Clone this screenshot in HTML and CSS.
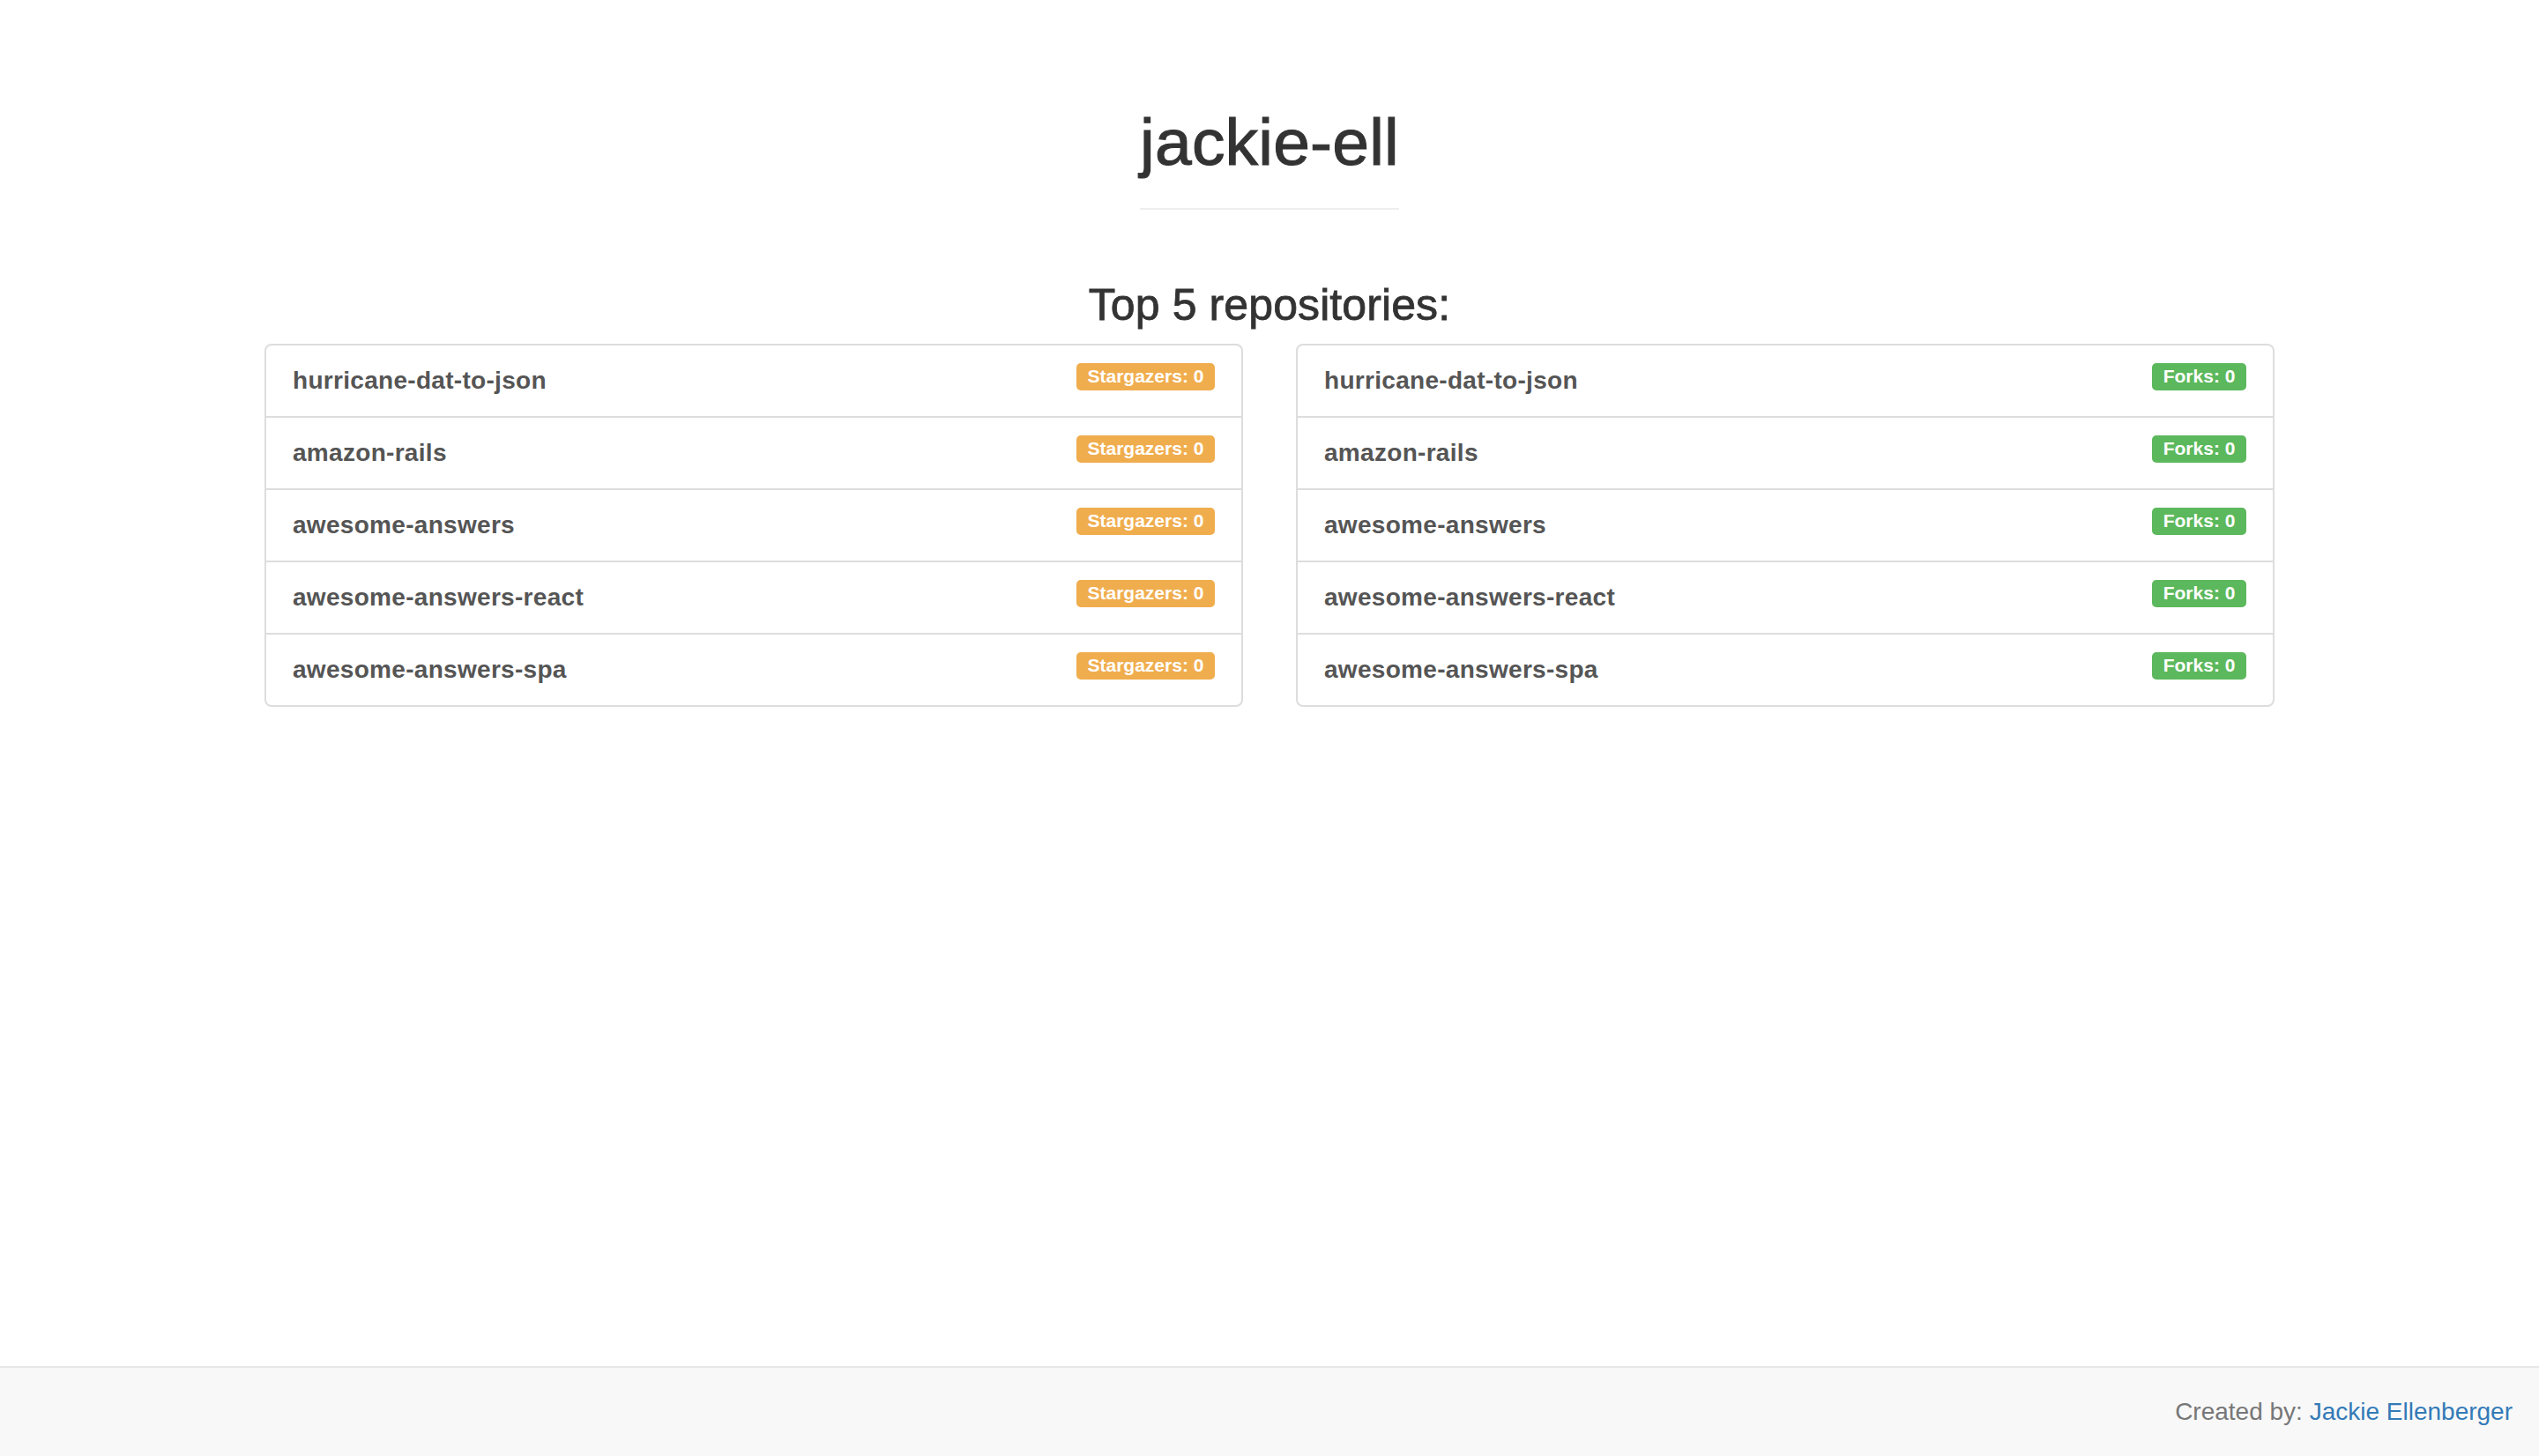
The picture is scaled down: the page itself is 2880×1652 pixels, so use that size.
FILE: index.html
```html
<!DOCTYPE html>
<html lang="en">
<head>
<meta charset="utf-8">
<title>jackie-ell</title>
<link rel="stylesheet" href="styles.css">
</head>
<body>
<main class="container">
  <div class="header-wrap">
    <div class="page-header"><h1>jackie-ell</h1></div>
  </div>
  <h2 class="section-title">Top 5 repositories:</h2>
  <div class="columns">
    <ul class="list-group">
      <li class="item"><span class="name">hurricane-dat-to-json</span><span class="label label-warning">Stargazers: 0</span></li>
      <li class="item"><span class="name">amazon-rails</span><span class="label label-warning">Stargazers: 0</span></li>
      <li class="item"><span class="name">awesome-answers</span><span class="label label-warning">Stargazers: 0</span></li>
      <li class="item"><span class="name">awesome-answers-react</span><span class="label label-warning">Stargazers: 0</span></li>
      <li class="item"><span class="name">awesome-answers-spa</span><span class="label label-warning">Stargazers: 0</span></li>
    </ul>
    <ul class="list-group">
      <li class="item"><span class="name">hurricane-dat-to-json</span><span class="label label-success">Forks: 0</span></li>
      <li class="item"><span class="name">amazon-rails</span><span class="label label-success">Forks: 0</span></li>
      <li class="item"><span class="name">awesome-answers</span><span class="label label-success">Forks: 0</span></li>
      <li class="item"><span class="name">awesome-answers-react</span><span class="label label-success">Forks: 0</span></li>
      <li class="item"><span class="name">awesome-answers-spa</span><span class="label label-success">Forks: 0</span></li>
    </ul>
  </div>
</main>
<footer class="footer">
  <p class="footer-text">Created by: <a class="footer-link" href="#">Jackie Ellenberger</a></p>
</footer>
</body>
</html>
```
FILE: styles.css
```css
* { box-sizing: border-box; }
html, body { height: 100%; }
body {
  margin: 0;
  min-height: 100vh;
  display: flex;
  flex-direction: column;
  font-family: "Liberation Sans", Helvetica, Arial, sans-serif;
  color: #333;
  background: #fff;
}
.container {
  width: 2280px;
  margin: 0 auto;
}
.header-wrap {
  display: flex;
  justify-content: center;
  margin-top: 120px;
}
.page-header {
  padding-bottom: 33px;
  border-bottom: 2px solid #eee;
}
.page-header h1 {
  margin: 0;
  font-size: 75px;
  line-height: 82.5px;
  font-weight: normal;
  letter-spacing: 0.2px;
  -webkit-text-stroke: 1.1px #333;
  color: #333;
}
.section-title {
  margin: 81px 0 17px;
  text-align: center;
  font-size: 50px;
  line-height: 54px;
  font-weight: normal;
  letter-spacing: 0.1px;
  -webkit-text-stroke: 0.8px #333;
  color: #333;
}
.columns {
  display: grid;
  grid-template-columns: 1fr 1fr;
  column-gap: 60px;
}
.list-group {
  list-style: none;
  margin: 0;
  padding: 0;
  border: 2px solid #ddd;
  border-radius: 8px;
}
.item {
  display: flex;
  justify-content: space-between;
  align-items: flex-start;
  padding: 20px 30px;
  line-height: 40px;
}
.item + .item { border-top: 2px solid #ddd; }
.name {
  font-size: 28px;
  font-weight: bold;
  letter-spacing: 0.3px;
  color: #555;
}
.label {
  display: block;
  font-size: 21px;
  font-weight: bold;
  line-height: 1;
  padding: 4.2px 12.6px 6.3px;
  border-radius: 5px;
  color: #fff;
  white-space: nowrap;
}
.label-warning { background: #f0ad4e; }
.label-success { background: #5cb85c; }
.footer {
  margin-top: auto;
  height: 102px;
  background: #f8f8f8;
  border-top: 2px solid #e7e7e7;
  display: flex;
  justify-content: flex-end;
  padding: 0 30px;
}
.footer-text {
  margin: 30px 0;
  font-size: 28px;
  line-height: 40px;
  color: #777;
}
.footer-link {
  color: #337ab7;
  text-decoration: none;
}
```
